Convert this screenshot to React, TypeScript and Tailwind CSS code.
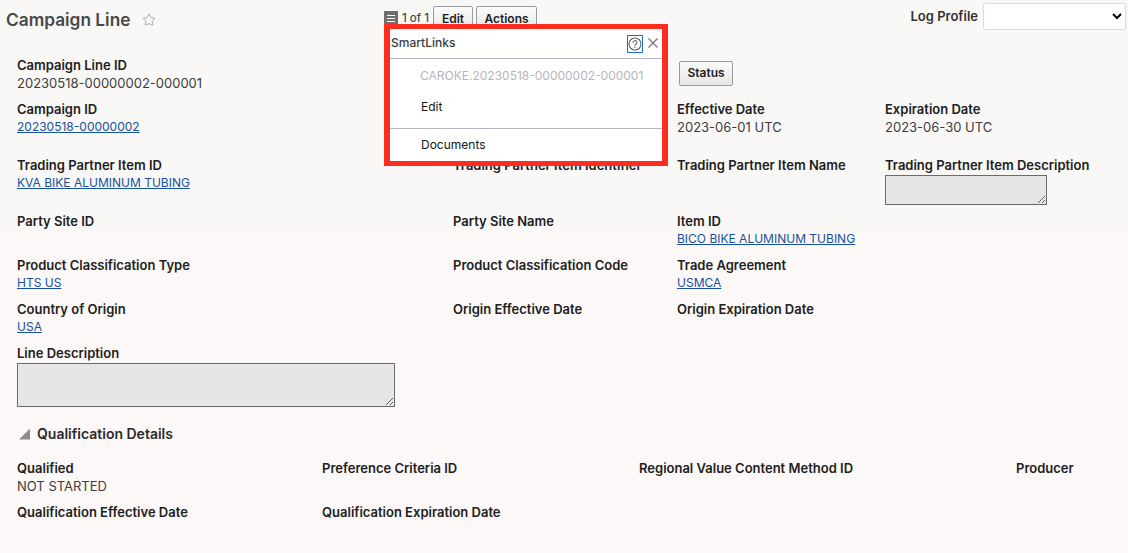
import { Star } from "lucide-react";

const font = "font-['Inter','Liberation_Sans',sans-serif]";

function Field({ label, value, link, className }: { label: string; value?: string; link?: boolean; className?: string }) {
  return (
    <div className={className}>
      <div className="h-[18px] whitespace-nowrap text-[13px] leading-[18px] font-semibold text-[#212121]">{label}</div>
      {value && !link && <div className="h-[18px] whitespace-nowrap text-[13px] leading-[18px] text-[#3d3d3d]">{value}</div>}
      {value && link && (
        <a href="#" className="block h-[18px] whitespace-nowrap text-[12px] leading-[18px] text-[#17519b] underline">
          {value}
        </a>
      )}
    </div>
  );
}

function ToolButton({ children, className }: { children: string; className?: string }) {
  return (
    <button className={`rounded-[2px] border border-[#9a9a9a] bg-gradient-to-b from-[#fbfbfb] to-[#e6e6e6] text-[12px] font-semibold text-[#1f1f1f] ${className ?? ""}`}>
      {children}
    </button>
  );
}

function SmartLinks() {
  return (
    <div className="absolute top-[24px] left-[384px] z-10 h-[142px] w-[284px] border-x-[6px] border-y-[5px] border-[#ff2d20] bg-white">
      <div className="flex h-[29px] items-center pr-[3px] pl-[1px]">
        <span className="mb-[2px] text-[12px] font-medium text-[#3b3b3b]">SmartLinks</span>
        <span className="ml-auto flex h-[18px] w-[16px] items-center justify-center border border-[#1a6fd0]">
          <svg width="14" height="14" viewBox="0 0 14 14" fill="none" stroke="#666666" strokeWidth="1.1">
            <circle cx="7" cy="7" r="6" />
            <path d="M5.1 5.5a1.9 1.9 0 1 1 3 1.5c-.7.5-1.1.8-1.1 1.6" strokeLinecap="round" />
            <circle cx="7" cy="10.4" r=".6" fill="#666666" stroke="none" />
          </svg>
        </span>
        <svg className="mb-[2px] ml-[4px]" width="12" height="12" viewBox="0 0 12 12" fill="none" stroke="#7a7a7a" strokeWidth="1.4">
          <path d="M1.5 1.5l9 9M10.5 1.5l-9 9" />
        </svg>
      </div>
      <div className="h-px bg-[#b4b4c4]" />
      <div className="pt-[8px] pl-[30px] text-[12px] leading-[18px] text-[#b5b5bd]">CAROKE.20230518-00000002-000001</div>
      <div className="pt-[13px] pl-[31px] text-[12px] leading-[18px] text-[#161616]">Edit</div>
      <div className="mt-[12px] h-px bg-[#b4b4c4]" />
      <div className="pt-[7px] pl-[31px] text-[12px] leading-[18px] text-[#161616]">Documents</div>
    </div>
  );
}

export default function App() {
  return (
    <div className={`relative h-[553px] w-[1128px] overflow-hidden bg-[linear-gradient(#f9f8f6_0,#f9f8f6_225px,#fcf8f7_235px)] ${font}`}>
      <SmartLinks />
      <div className="flex h-[50px] items-start">
        <div className="flex w-[384px] items-center pt-[9px] pl-[6px]">
          <h1 className="text-[17.3px] leading-[22px] font-semibold text-[#484848]">Campaign Line</h1>
          <Star className="ml-[12px] h-[14px] w-[14px] text-[#8a8a8a]" strokeWidth={1.2} />
        </div>
        <div className="flex items-center pt-[6px]">
          <span className="mb-[2px] flex h-[14px] w-[14px] flex-col items-center justify-center gap-[2px] bg-[#6f6f6f]">
            <i className="h-px w-[8px] bg-white" />
            <i className="h-px w-[8px] bg-white" />
            <i className="h-px w-[8px] bg-white" />
          </span>
          <span className="ml-[4px] w-[31px] text-[11.5px] font-medium text-[#4a4a4a]">1 of 1</span>
          <ToolButton className="h-[26px] w-[40px]">Edit</ToolButton>
          <ToolButton className="ml-[3px] h-[26px] w-[61px]">Actions</ToolButton>
        </div>
        <div className="ml-auto flex items-center pt-[3px] pr-[2px]">
          <label className="mr-[5px] text-[13px] font-semibold text-[#333]">Log Profile</label>
          <select className="h-[27px] w-[143px] rounded-[2px] border border-[#dcdcdc] bg-white" />
        </div>
      </div>

      <div className="grid grid-cols-[436px_224px_208px_1fr] px-[17px]">
        <Field label="Campaign Line ID" value="20230518-00000002-000001" className="col-start-1 h-[44px] pt-[6px]" />
        <div className="col-start-3 ml-[2px] pt-[9px]">
          <ToolButton className="h-[25px] w-[54px]">Status</ToolButton>
        </div>
      </div>
      <div className="mt-[6px] grid grid-cols-[436px_224px_208px_1fr] px-[17px]">
        <Field label="Campaign ID" value="20230518-00000002" link className="h-[56px]" />
        <div />
        <Field label="Effective Date" value="2023-06-01 UTC" />
        <Field label="Expiration Date" value="2023-06-30 UTC" />

        <Field label="Trading Partner Item ID" value="KVA BIKE ALUMINUM TUBING" link className="h-[56px]" />
        <Field label="Trading Partner Item Identifier" />
        <Field label="Trading Partner Item Name" />
        <div>
          <Field label="Trading Partner Item Description" />
          <textarea disabled className="mt-px block h-[30px] w-[162px] border border-[#6b6b6b] bg-[#e6e6e6]" />
        </div>

        <Field label="Party Site ID" className="h-[44px]" />
        <Field label="Party Site Name" />
        <Field label="Item ID" value="BICO BIKE ALUMINUM TUBING" link />
        <div />

        <Field label="Product Classification Type" value="HTS US" link className="h-[44px]" />
        <Field label="Product Classification Code" />
        <Field label="Trade Agreement" value="USMCA" link />
        <div />

        <Field label="Country of Origin" value="USA" link className="h-[44px]" />
        <Field label="Origin Effective Date" />
        <Field label="Origin Expiration Date" />
        <div />
      </div>

      <div className="px-[17px]">
        <Field label="Line Description" />
        <textarea disabled className="mt-px block h-[44px] w-[378px] border border-[#6b6b6b] bg-[#e6e6e6]" />
      </div>

      <div className="mt-[18px] flex items-center pl-[19px]">
        <span className="h-[11px] w-[11px] bg-[#8b8b8b] [clip-path:polygon(100%_0,100%_100%,0_100%)]" />
        <h2 className="ml-[7px] text-[14px] leading-[18px] font-semibold text-[#2b2b2b]">Qualification Details</h2>
      </div>

      <div className="mt-[16px] grid grid-cols-[305px_317px_377px_1fr] px-[17px]">
        <Field label="Qualified" value="NOT STARTED" className="h-[44px]" />
        <Field label="Preference Criteria ID" />
        <Field label="Regional Value Content Method ID" />
        <Field label="Producer" />
        <Field label="Qualification Effective Date" />
        <Field label="Qualification Expiration Date" />
      </div>
    </div>
  );
}
